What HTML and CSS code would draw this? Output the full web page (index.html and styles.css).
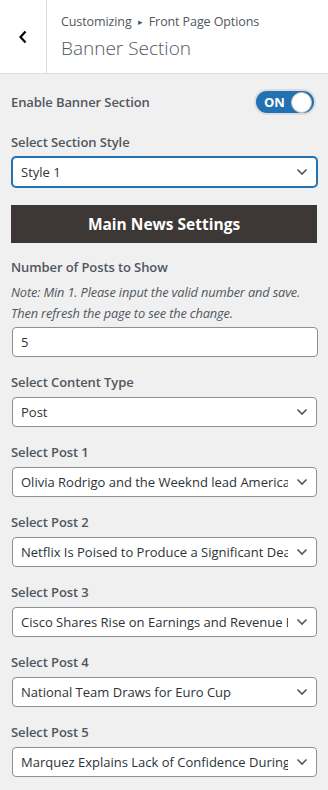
FILE: index.html
```html
<!DOCTYPE html>
<html lang="en">
<head>
    <meta charset="UTF-8">
    <meta name="viewport" content="width=device-width, initial-scale=1.0">
    <title>Customizing Banner Section</title>
    <link rel="stylesheet" href="styles.css">
</head>
<body>
    <div class="panel-header">
        <button class="back-btn" type="button" aria-label="Back">
            <svg width="10" height="14" viewBox="0 0 10 14"><path d="M7.5 1.5 L2.5 7 L7.5 12.5" fill="none" stroke="#000" stroke-width="2.2"/></svg>
        </button>
        <div class="panel-title">
            <span class="breadcrumb">Customizing <span class="sep">&#9656;</span> Front Page Options</span>
            <h3>Banner Section</h3>
        </div>
    </div>

    <div class="panel-body">
        <!-- Toggle -->
        <div class="toggle-row">
            <span class="label">Enable Banner Section</span>
            <span class="switch"><span class="switch-text">ON</span><span class="knob"></span></span>
        </div>

        <div class="control">
            <span class="label">Select Section Style</span>
            <div class="select-wrap">
                <select class="focused"><option>Style 1</option></select>
                <svg class="arrow" width="12" height="8" viewBox="0 0 12 8"><path d="M1.5 1.5 L6 6 L10.5 1.5" fill="none" stroke="#50575e" stroke-width="1.6"/></svg>
            </div>
        </div>

        <div class="section-title">Main News Settings</div>

        <div class="control">
            <span class="label">Number of Posts to Show</span>
            <p class="note">Note: Min 1. Please input the valid number and save. Then refresh the page to see the change.</p>
            <input type="number" value="5">
        </div>

        <div class="control">
            <span class="label">Select Content Type</span>
            <div class="select-wrap">
                <select><option>Post</option></select>
                <svg class="arrow" width="12" height="8" viewBox="0 0 12 8"><path d="M1.5 1.5 L6 6 L10.5 1.5" fill="none" stroke="#50575e" stroke-width="1.6"/></svg>
            </div>
        </div>

        <div class="control">
            <span class="label">Select Post 1</span>
            <div class="select-wrap">
                <select><option>Olivia Rodrigo and the Weeknd lead American Music Awards nominations</option></select>
                <svg class="arrow" width="12" height="8" viewBox="0 0 12 8"><path d="M1.5 1.5 L6 6 L10.5 1.5" fill="none" stroke="#50575e" stroke-width="1.6"/></svg>
            </div>
        </div>

        <div class="control">
            <span class="label">Select Post 2</span>
            <div class="select-wrap">
                <select><option>Netflix Is Poised to Produce a Significant Deal</option></select>
                <svg class="arrow" width="12" height="8" viewBox="0 0 12 8"><path d="M1.5 1.5 L6 6 L10.5 1.5" fill="none" stroke="#50575e" stroke-width="1.6"/></svg>
            </div>
        </div>

        <div class="control">
            <span class="label">Select Post 3</span>
            <div class="select-wrap">
                <select><option>Cisco Shares Rise on Earnings and Revenue Beat</option></select>
                <svg class="arrow" width="12" height="8" viewBox="0 0 12 8"><path d="M1.5 1.5 L6 6 L10.5 1.5" fill="none" stroke="#50575e" stroke-width="1.6"/></svg>
            </div>
        </div>

        <div class="control">
            <span class="label">Select Post 4</span>
            <div class="select-wrap">
                <select><option>National Team Draws for Euro Cup</option></select>
                <svg class="arrow" width="12" height="8" viewBox="0 0 12 8"><path d="M1.5 1.5 L6 6 L10.5 1.5" fill="none" stroke="#50575e" stroke-width="1.6"/></svg>
            </div>
        </div>

        <div class="control">
            <span class="label">Select Post 5</span>
            <div class="select-wrap">
                <select><option>Marquez Explains Lack of Confidence During Race</option></select>
                <svg class="arrow" width="12" height="8" viewBox="0 0 12 8"><path d="M1.5 1.5 L6 6 L10.5 1.5" fill="none" stroke="#50575e" stroke-width="1.6"/></svg>
            </div>
        </div>
    </div>
</body>
</html>
```

FILE: styles.css
```css
body {
    font-family: "Open Sans", "Noto Sans", sans-serif;
    margin: 0;
    padding: 0;
    background-color: #f0f0f1;
    color: #50575e;
    overflow: hidden;
}

/* Header */
.panel-header {
    display: flex;
    height: 73px;
    background-color: #fff;
    border-bottom: 1px solid #dcdcde;
}

.back-btn {
    width: 47px;
    border: 0;
    border-right: 1px solid #dcdcde;
    background: #fff;
    padding: 0;
    display: flex;
    align-items: center;
    justify-content: center;
}

.panel-title {
    padding: 12px 0 0 14px;
}

.breadcrumb {
    display: block;
    font-size: 12.5px;
    line-height: 20px;
    letter-spacing: -0.1px;
}

.breadcrumb .sep {
    font-size: 9px;
    margin: 0 3px;
    vertical-align: 1px;
}

.panel-title h3 {
    margin: 1px 0 0;
    font-size: 19px;
    font-weight: 300;
    line-height: 30px;
}

/* Body */
.panel-body {
    padding: 15px 11px 0 11px;
}

.label {
    display: block;
    font-size: 13px;
    font-weight: 600;
    line-height: 20px;
    letter-spacing: -0.1px;
}

.toggle-row {
    display: flex;
    align-items: center;
    justify-content: space-between;
    height: 26px;
    margin-bottom: 17px;
}

.switch {
    display: flex;
    align-items: center;
    justify-content: space-between;
    width: 48px;
    height: 22px;
    padding: 0 2px 0 8px;
    margin-right: 3px;
    border-radius: 13px;
    background-color: #2271b1;
    box-shadow: 0 0 0 2px #dcdcde;
    box-sizing: content-box;
}

.switch-text {
    color: #fff;
    font-size: 13px;
    font-weight: 700;
}

.knob {
    width: 19px;
    height: 19px;
    border-radius: 50%;
    background: #fff;
    border: 1px solid #c3c4c7;
}

.control {
    margin-bottom: 15px;
}

.control .label {
    margin-bottom: 5px;
}

.select-wrap {
    position: relative;
    margin-left: 1px;
}

select,
input[type="number"] {
    display: block;
    width: 100%;
    height: 30px;
    box-sizing: border-box;
    border: 1px solid #8c8f94;
    border-radius: 4px;
    background-color: #fff;
    color: #2c3338;
    font-family: "Open Sans", "Noto Sans", sans-serif;
    font-size: 13px;
    padding: 0 28px 0 8px;
    -webkit-appearance: none;
    appearance: none;
    outline: none;
}

input[type="number"] {
    padding-right: 8px;
    margin-left: 1px;
    -moz-appearance: textfield;
}

select.focused {
    border-color: #2271b1;
    box-shadow: 0 0 0 1px #2271b1;
}

.arrow {
    position: absolute;
    right: 9px;
    top: 11px;
    pointer-events: none;
}

.section-title {
    background-color: #3d3735;
    color: #fff;
    text-align: center;
    font-size: 15.5px;
    font-weight: 700;
    line-height: 38px;
    margin: 18px 0 14px;
}

.note {
    margin: 0 0 3px;
    font-size: 12.8px;
    font-style: italic;
    line-height: 21px;
    letter-spacing: -0.15px;
}
```
